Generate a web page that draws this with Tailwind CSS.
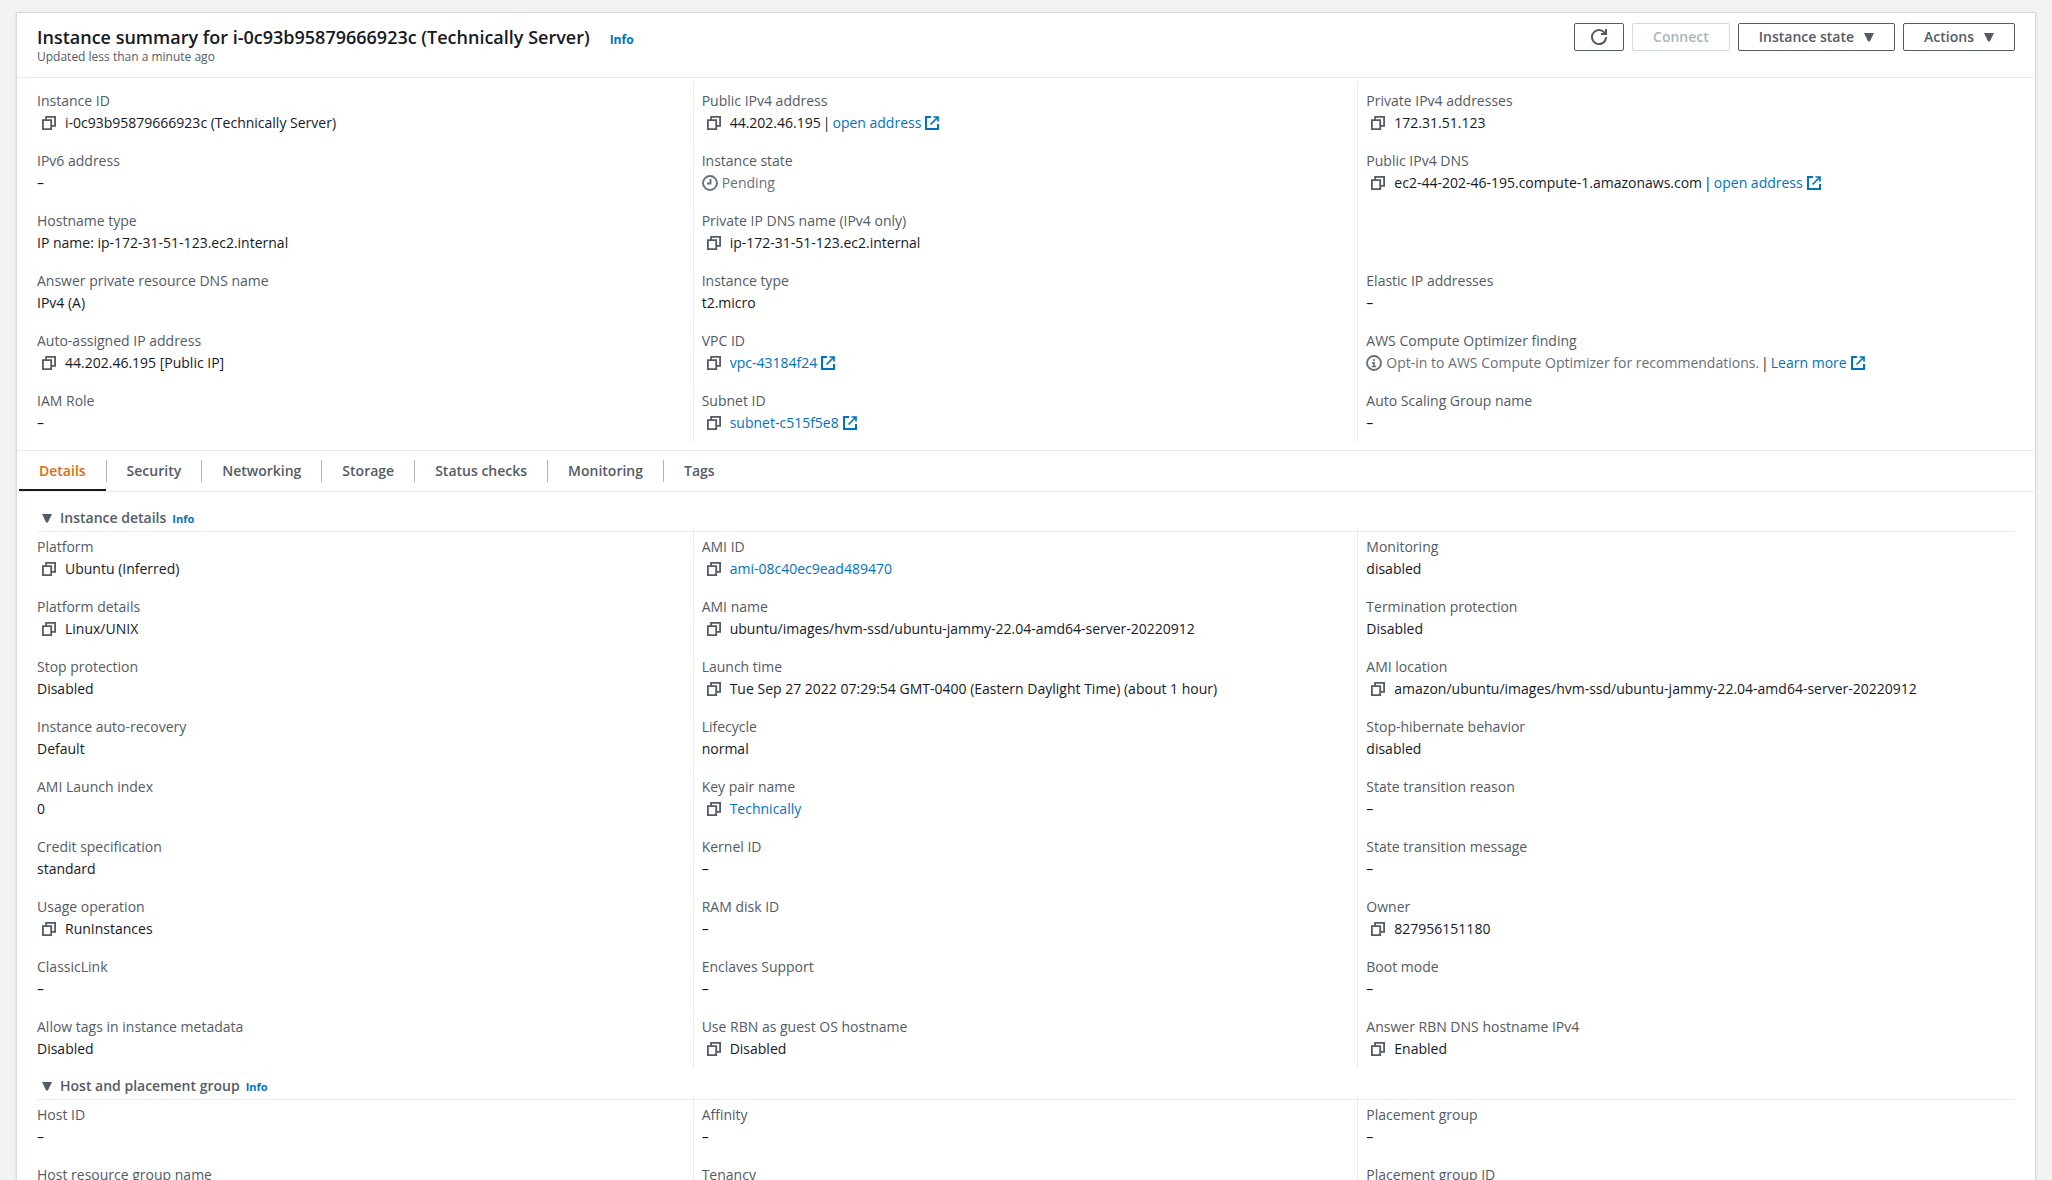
<!DOCTYPE html>
<html lang="en">
<head>
    <meta charset="UTF-8">
    <meta name="viewport" content="width=device-width, initial-scale=1.0">
    <title>Instance summary - EC2</title>
    <script src="https://cdn.jsdelivr.net/npm/@tailwindcss/browser@4"></script>
</head>
<body class="h-screen overflow-hidden bg-[#f2f3f3] px-4 pt-3 font-['Open_Sans','Noto_Sans',sans-serif] text-sm leading-[22px] text-[#16191f]">
    <!-- icon sprite -->
    <svg class="hidden" fill="none" stroke="currentColor">
        <symbol id="copy" viewBox="0 0 14 14"><path d="M.9 4.2h8.3v8.9H.9zM4.1 4V.9h9v9H9.4" stroke-width="1.8"/></symbol>
        <symbol id="external" viewBox="0 0 14 14"><path d="M6 1H1v12h12V8" stroke-width="2"/><path d="M8.5 1H13v4.5M13 1 5.5 8.5" stroke-width="1.7"/></symbol>
        <symbol id="pending" viewBox="0 0 16 16"><circle cx="8" cy="8" r="7" stroke-width="1.9"/><path d="M8.5 4v4.5H5" stroke-width="1.9"/></symbol>
        <symbol id="info" viewBox="0 0 16 16"><circle cx="8" cy="8" r="7" stroke-width="1.9"/><path d="M8 4v2M6 7.8h2v3.5M5.8 11.5h4.4" stroke-width="1.7"/></symbol>
        <symbol id="refresh" viewBox="0 0 16 16"><path d="M10 5h5V0M15 8a7 7 0 1 1-.7-3" stroke-width="2"/></symbol>
        <symbol id="caret" viewBox="0 0 10 9"><path d="M0 0h10L5.8 8.4H4.2z" fill="currentColor" stroke="none"/></symbol>
    </svg>

    <main class="border border-[#d5dbdb] bg-white shadow-sm">
        <header class="flex justify-between border-b border-[#eaeded] px-5 pt-2.5 pb-3.5">
            <div>
                <div class="flex items-baseline gap-5">
                    <h1 class="text-lg leading-7 font-semibold">Instance summary for i-0c93b95879666923c (Technically Server)</h1>
                    <a href="#" class="text-xs font-bold text-[#0073bb]">Info</a>
                </div>
                <p class="text-xs leading-3 text-[#545b64]">Updated less than a minute ago</p>
            </div>
            <div class="flex gap-2 font-semibold text-[#545b64]">
                <button type="button" aria-label="Refresh" class="flex h-7 items-center rounded-xs border border-[#545b64] px-4"><svg class="size-4" fill="none" stroke="currentColor"><use href="#refresh"/></svg></button>
                <button type="button" disabled class="h-7 rounded-xs border border-[#d5dbdb] px-5 leading-6 text-[#aab7b8]">Connect</button>
                <button type="button" class="flex h-7 items-center gap-2.5 rounded-xs border border-[#545b64] px-5">Instance state <svg class="h-[9px] w-2.5"><use href="#caret"/></svg></button>
                <button type="button" class="flex h-7 items-center gap-2.5 rounded-xs border border-[#545b64] px-5">Actions <svg class="h-[9px] w-2.5"><use href="#caret"/></svg></button>
            </div>
        </header>

        <section class="px-5 pt-1 pb-2">
            <dl class="-mr-[7px] -ml-[9px] grid grid-cols-3 *:min-h-15 *:border-l *:border-[#eaeded] *:p-2 [&_a]:text-[#0073bb] [&_dd]:flex [&_dd]:items-center [&_dt]:text-[#545b64] [&>div:nth-child(3n+1)]:border-transparent">
                <div><dt>Instance ID</dt><dd><svg class="mr-[9px] ml-[5px] size-3.5 text-[#545b64]" fill="none" stroke="currentColor"><use href="#copy"/></svg>i-0c93b95879666923c (Technically Server)</dd></div>
                <div><dt>Public IPv4 address</dt><dd><svg class="mr-[9px] ml-[5px] size-3.5 text-[#545b64]" fill="none" stroke="currentColor"><use href="#copy"/></svg>44.202.46.195<span class="mx-0.5">|</span><a href="#" class="flex items-center gap-1">open address <svg class="size-3.5" fill="none" stroke="currentColor"><use href="#external"/></svg></a></dd></div>
                <div><dt>Private IPv4 addresses</dt><dd><svg class="mr-[9px] ml-[5px] size-3.5 text-[#545b64]" fill="none" stroke="currentColor"><use href="#copy"/></svg>172.31.51.123</dd></div>

                <div><dt>IPv6 address</dt><dd>–</dd></div>
                <div><dt>Instance state</dt><dd class="gap-1 text-[#687078]"><svg class="size-4" fill="none" stroke="currentColor"><use href="#pending"/></svg>Pending</dd></div>
                <div><dt>Public IPv4 DNS</dt><dd><svg class="mr-[9px] ml-[5px] size-3.5 text-[#545b64]" fill="none" stroke="currentColor"><use href="#copy"/></svg>ec2-44-202-46-195.compute-1.amazonaws.com<span class="mx-0.5">|</span><a href="#" class="flex items-center gap-1">open address <svg class="size-3.5" fill="none" stroke="currentColor"><use href="#external"/></svg></a></dd></div>

                <div><dt>Hostname type</dt><dd>IP name: ip-172-31-51-123.ec2.internal</dd></div>
                <div><dt>Private IP DNS name (IPv4 only)</dt><dd><svg class="mr-[9px] ml-[5px] size-3.5 text-[#545b64]" fill="none" stroke="currentColor"><use href="#copy"/></svg>ip-172-31-51-123.ec2.internal</dd></div>
                <div></div>

                <div><dt>Answer private resource DNS name</dt><dd>IPv4 (A)</dd></div>
                <div><dt>Instance type</dt><dd>t2.micro</dd></div>
                <div><dt>Elastic IP addresses</dt><dd>–</dd></div>

                <div><dt>Auto-assigned IP address</dt><dd><svg class="mr-[9px] ml-[5px] size-3.5 text-[#545b64]" fill="none" stroke="currentColor"><use href="#copy"/></svg>44.202.46.195 [Public IP]</dd></div>
                <div><dt>VPC ID</dt><dd><svg class="mr-[9px] ml-[5px] size-3.5 text-[#545b64]" fill="none" stroke="currentColor"><use href="#copy"/></svg><a href="#" class="flex items-center gap-1">vpc-43184f24 <svg class="size-3.5" fill="none" stroke="currentColor"><use href="#external"/></svg></a></dd></div>
                <div><dt>AWS Compute Optimizer finding</dt><dd><span class="flex items-center gap-1 text-[#687078]"><svg class="size-4" fill="none" stroke="currentColor"><use href="#info"/></svg>Opt-in to AWS Compute Optimizer for recommendations.</span><span class="mx-0.5">|</span><a href="#" class="flex items-center gap-1">Learn more <svg class="size-3.5" fill="none" stroke="currentColor"><use href="#external"/></svg></a></dd></div>

                <div><dt>IAM Role</dt><dd>–</dd></div>
                <div><dt>Subnet ID</dt><dd><svg class="mr-[9px] ml-[5px] size-3.5 text-[#545b64]" fill="none" stroke="currentColor"><use href="#copy"/></svg><a href="#" class="flex items-center gap-1">subnet-c515f5e8 <svg class="size-3.5" fill="none" stroke="currentColor"><use href="#external"/></svg></a></dd></div>
                <div><dt>Auto Scaling Group name</dt><dd>–</dd></div>
            </dl>
        </section>

        <div role="tablist" class="flex h-[42px] items-center border-y border-[#eaeded] pl-0.5 font-semibold text-[#545b64] *:h-[22px] *:border-[#aab7b8] *:px-5 *:not-last:border-r">
            <button type="button" role="tab" aria-selected="true" class="relative text-[#dd6b10]">Details<span class="absolute inset-x-0 -bottom-[9px] h-0.5 bg-[#16191f]"></span></button>
            <button type="button" role="tab">Security</button>
            <button type="button" role="tab">Networking</button>
            <button type="button" role="tab">Storage</button>
            <button type="button" role="tab">Status checks</button>
            <button type="button" role="tab">Monitoring</button>
            <button type="button" role="tab">Tags</button>
        </div>

        <section class="px-5 pt-2">
            <div class="flex h-8 items-baseline gap-1.5 border-b border-[#eaeded] pt-[7px]">
                <h2><button type="button" aria-expanded="true" class="flex items-center gap-2 pl-[5px] font-semibold text-[#545b64]"><svg class="h-[9px] w-2.5"><use href="#caret"/></svg>Instance details</button></h2>
                <a href="#" class="text-[11px] font-bold text-[#0073bb]">Info</a>
            </div>
            <dl class="-mt-1 -mr-[7px] -ml-[9px] grid grid-cols-3 *:min-h-15 *:border-l *:border-[#eaeded] *:p-2 [&_a]:text-[#0073bb] [&_dd]:flex [&_dd]:items-center [&_dt]:text-[#545b64] [&>div:nth-child(3n+1)]:border-transparent">
                <div><dt>Platform</dt><dd><svg class="mr-[9px] ml-[5px] size-3.5 text-[#545b64]" fill="none" stroke="currentColor"><use href="#copy"/></svg>Ubuntu (Inferred)</dd></div>
                <div><dt>AMI ID</dt><dd><svg class="mr-[9px] ml-[5px] size-3.5 text-[#545b64]" fill="none" stroke="currentColor"><use href="#copy"/></svg><a href="#">ami-08c40ec9ead489470</a></dd></div>
                <div><dt>Monitoring</dt><dd>disabled</dd></div>

                <div><dt>Platform details</dt><dd><svg class="mr-[9px] ml-[5px] size-3.5 text-[#545b64]" fill="none" stroke="currentColor"><use href="#copy"/></svg>Linux/UNIX</dd></div>
                <div><dt>AMI name</dt><dd><svg class="mr-[9px] ml-[5px] size-3.5 text-[#545b64]" fill="none" stroke="currentColor"><use href="#copy"/></svg>ubuntu/images/hvm-ssd/ubuntu-jammy-22.04-amd64-server-20220912</dd></div>
                <div><dt>Termination protection</dt><dd>Disabled</dd></div>

                <div><dt>Stop protection</dt><dd>Disabled</dd></div>
                <div><dt>Launch time</dt><dd><svg class="mr-[9px] ml-[5px] size-3.5 text-[#545b64]" fill="none" stroke="currentColor"><use href="#copy"/></svg>Tue Sep 27 2022 07:29:54 GMT-0400 (Eastern Daylight Time) (about 1 hour)</dd></div>
                <div><dt>AMI location</dt><dd><svg class="mr-[9px] ml-[5px] size-3.5 text-[#545b64]" fill="none" stroke="currentColor"><use href="#copy"/></svg>amazon/ubuntu/images/hvm-ssd/ubuntu-jammy-22.04-amd64-server-20220912</dd></div>

                <div><dt>Instance auto-recovery</dt><dd>Default</dd></div>
                <div><dt>Lifecycle</dt><dd>normal</dd></div>
                <div><dt>Stop-hibernate behavior</dt><dd>disabled</dd></div>

                <div><dt>AMI Launch index</dt><dd>0</dd></div>
                <div><dt>Key pair name</dt><dd><svg class="mr-[9px] ml-[5px] size-3.5 text-[#545b64]" fill="none" stroke="currentColor"><use href="#copy"/></svg><a href="#">Technically</a></dd></div>
                <div><dt>State transition reason</dt><dd>–</dd></div>

                <div><dt>Credit specification</dt><dd>standard</dd></div>
                <div><dt>Kernel ID</dt><dd>–</dd></div>
                <div><dt>State transition message</dt><dd>–</dd></div>

                <div><dt>Usage operation</dt><dd><svg class="mr-[9px] ml-[5px] size-3.5 text-[#545b64]" fill="none" stroke="currentColor"><use href="#copy"/></svg>RunInstances</dd></div>
                <div><dt>RAM disk ID</dt><dd>–</dd></div>
                <div><dt>Owner</dt><dd><svg class="mr-[9px] ml-[5px] size-3.5 text-[#545b64]" fill="none" stroke="currentColor"><use href="#copy"/></svg>827956151180</dd></div>

                <div><dt>ClassicLink</dt><dd>–</dd></div>
                <div><dt>Enclaves Support</dt><dd>–</dd></div>
                <div><dt>Boot mode</dt><dd>–</dd></div>

                <div><dt>Allow tags in instance metadata</dt><dd>Disabled</dd></div>
                <div><dt>Use RBN as guest OS hostname</dt><dd><svg class="mr-[9px] ml-[5px] size-3.5 text-[#545b64]" fill="none" stroke="currentColor"><use href="#copy"/></svg>Disabled</dd></div>
                <div><dt>Answer RBN DNS hostname IPv4</dt><dd><svg class="mr-[9px] ml-[5px] size-3.5 text-[#545b64]" fill="none" stroke="currentColor"><use href="#copy"/></svg>Enabled</dd></div>
            </dl>
        </section>

        <section class="px-5">
            <div class="flex h-8 items-baseline gap-1.5 border-b border-[#eaeded] pt-[7px]">
                <h2><button type="button" aria-expanded="true" class="flex items-center gap-2 pl-[5px] font-semibold text-[#545b64]"><svg class="h-[9px] w-2.5"><use href="#caret"/></svg>Host and placement group</button></h2>
                <a href="#" class="text-[11px] font-bold text-[#0073bb]">Info</a>
            </div>
            <dl class="-mt-1 -mr-[7px] -ml-[9px] grid grid-cols-3 *:min-h-15 *:border-l *:border-[#eaeded] *:p-2 [&_dt]:text-[#545b64] [&>div:nth-child(3n+1)]:border-transparent">
                <div><dt>Host ID</dt><dd>–</dd></div>
                <div><dt>Affinity</dt><dd>–</dd></div>
                <div><dt>Placement group</dt><dd>–</dd></div>

                <div><dt>Host resource group name</dt></div>
                <div><dt>Tenancy</dt></div>
                <div><dt>Placement group ID</dt></div>
            </dl>
        </section>
    </main>
</body>
</html>
